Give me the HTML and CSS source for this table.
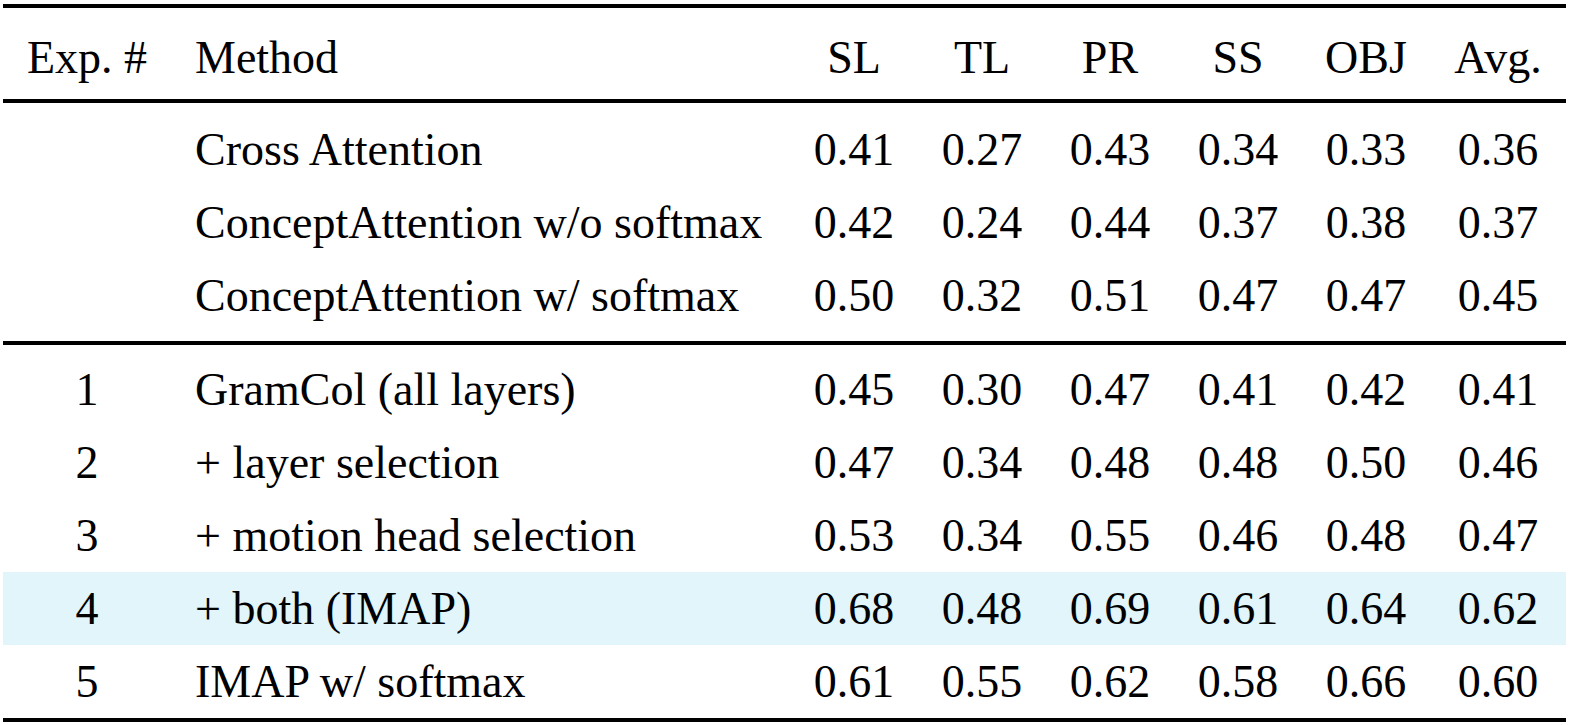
FILE: index.html
```html
<!DOCTYPE html>
<html>
<head>
<meta charset="utf-8">
<link rel="stylesheet" href="styles.css">
</head>
<body>
<div class="wrap">
<table class="results">
  <colgroup>
    <col class="c-exp"><col class="c-method"><col class="c-num"><col class="c-num"><col class="c-num"><col class="c-num"><col class="c-num"><col class="c-avg">
  </colgroup>
  <thead>
    <tr>
      <th class="exp">Exp. #</th><th class="method">Method</th><th>SL</th><th>TL</th><th>PR</th><th>SS</th><th>OBJ</th><th>Avg.</th>
    </tr>
  </thead>
  <tbody class="g1">
    <tr class="first"><td class="exp"></td><td class="method">Cross Attention</td><td>0.41</td><td>0.27</td><td>0.43</td><td>0.34</td><td>0.33</td><td>0.36</td></tr>
    <tr><td class="exp"></td><td class="method">ConceptAttention w/o softmax</td><td>0.42</td><td>0.24</td><td>0.44</td><td>0.37</td><td>0.38</td><td>0.37</td></tr>
    <tr class="last"><td class="exp"></td><td class="method">ConceptAttention w/ softmax</td><td>0.50</td><td>0.32</td><td>0.51</td><td>0.47</td><td>0.47</td><td>0.45</td></tr>
  </tbody>
  <tbody class="g2">
    <tr class="first"><td class="exp">1</td><td class="method">GramCol (all layers)</td><td>0.45</td><td>0.30</td><td>0.47</td><td>0.41</td><td>0.42</td><td>0.41</td></tr>
    <tr><td class="exp">2</td><td class="method">+ layer selection</td><td>0.47</td><td>0.34</td><td>0.48</td><td>0.48</td><td>0.50</td><td>0.46</td></tr>
    <tr><td class="exp">3</td><td class="method">+ motion head selection</td><td>0.53</td><td>0.34</td><td>0.55</td><td>0.46</td><td>0.48</td><td>0.47</td></tr>
    <tr class="hl"><td class="exp">4</td><td class="method">+ both (IMAP)</td><td>0.68</td><td>0.48</td><td>0.69</td><td>0.61</td><td>0.64</td><td>0.62</td></tr>
    <tr class="last"><td class="exp">5</td><td class="method">IMAP w/ softmax</td><td>0.61</td><td>0.55</td><td>0.62</td><td>0.58</td><td>0.66</td><td>0.60</td></tr>
  </tbody>
</table>
</div>
</body>
</html>
```
FILE: styles.css
```css
html, body {
  margin: 0;
  padding: 0;
  background: #ffffff;
}

.wrap {
  padding: 4px 0 0 3px;
}

.results {
  border-collapse: separate;
  border-spacing: 0;
  table-layout: fixed;
  width: 1563px;
  font-family: "Liberation Serif", "Times New Roman", serif;
  font-size: 46px;
  color: #000;
}

.c-exp { width: 168px; }
.c-method { width: 619px; }
.c-num { width: 128px; }
.c-avg { width: 136px; }

.results th,
.results td {
  padding: 0;
  line-height: 73px;
  height: 73px;
  text-align: center;
  font-weight: normal;
  white-space: nowrap;
  vertical-align: top;
}

.results .method {
  text-align: left;
  padding-left: 24px;
}

.results thead th {
  border-top: 4px solid #000;
  border-bottom: 4px solid #000;
  padding-top: 13px;
  padding-bottom: 5px;
}

.g1 tr.first td { padding-top: 10px; }
.g1 tr.last td {
  padding-bottom: 9px;
  border-bottom: 4px solid #000;
}

.g2 tr.first td { padding-top: 8px; }
.g2 tr.last td {
  border-bottom: 4px solid #000;
}

.results tr.hl td {
  background: #e1f5fb;
}
```
